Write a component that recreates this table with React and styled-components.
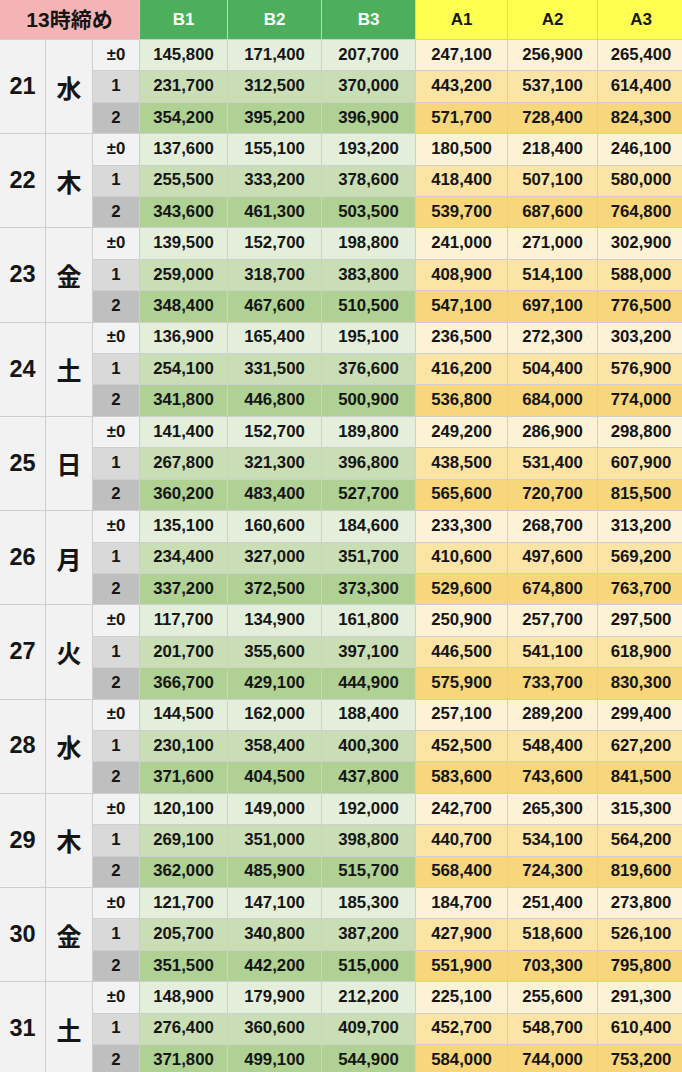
import React from "react";
import styled, { createGlobalStyle } from "styled-components";

const GlobalStyle = createGlobalStyle`
  html, body {
    margin: 0;
    padding: 0;
    overflow: hidden;
    background: #fff;
  }
  body {
    font-family: "Liberation Sans", Arial, "Noto Sans CJK JP", sans-serif;
    color: #151515;
  }
`;

const Sheet = styled.div`
  display: grid;
  grid-template-columns: 45px 46px 46px 87px 93px 93px 91px 89px 86px;
  grid-template-rows: 39px repeat(33, 30.41px);
  gap: 1px;
  width: 682px;
  background: #cfcfcf;
  font-weight: 700;
  font-size: 16.8px;
`;

const Cell = styled.div`
  display: flex;
  align-items: center;
  justify-content: center;
  background: ${(p) => p.$bg};
  white-space: nowrap;
  line-height: 1;
`;

const TitleCell = styled(Cell)`
  grid-column: span 3;
  background: #f4b4b6;
  font-size: 21px;
  font-family: "Liberation Sans", "Noto Sans CJK JP", sans-serif;
`;

const HeadCell = styled(Cell)`
  background: ${(p) => (p.$kind === "B" ? "#4caf5b" : "#ffff52")};
  color: ${(p) => (p.$kind === "B" ? "#fff" : "#151515")};
  font-size: 17px;
`;

const DateCell = styled(Cell)`
  grid-row: span 3;
  background: #f2f2f2;
  font-size: 23.5px;
`;

const DayCell = styled(Cell)`
  grid-row: span 3;
  background: #f2f2f2;
  font-size: 25px;
  font-family: "Noto Sans CJK JP", sans-serif;
  padding-top: 1px;
`;

const labelBg = ["#f2f2f2", "#d9d9d9", "#bfbfbf"];
const bBg = ["#e4efdb", "#c9deb5", "#afd193"];
const aBg = ["#fdf2d6", "#fce4a6", "#f8d77c"];
const labels = ["±0", "1", "2"];

const days = [
  ["21", "水", [
    ["145,800", "171,400", "207,700", "247,100", "256,900", "265,400"],
    ["231,700", "312,500", "370,000", "443,200", "537,100", "614,400"],
    ["354,200", "395,200", "396,900", "571,700", "728,400", "824,300"],
  ]],
  ["22", "木", [
    ["137,600", "155,100", "193,200", "180,500", "218,400", "246,100"],
    ["255,500", "333,200", "378,600", "418,400", "507,100", "580,000"],
    ["343,600", "461,300", "503,500", "539,700", "687,600", "764,800"],
  ]],
  ["23", "金", [
    ["139,500", "152,700", "198,800", "241,000", "271,000", "302,900"],
    ["259,000", "318,700", "383,800", "408,900", "514,100", "588,000"],
    ["348,400", "467,600", "510,500", "547,100", "697,100", "776,500"],
  ]],
  ["24", "土", [
    ["136,900", "165,400", "195,100", "236,500", "272,300", "303,200"],
    ["254,100", "331,500", "376,600", "416,200", "504,400", "576,900"],
    ["341,800", "446,800", "500,900", "536,800", "684,000", "774,000"],
  ]],
  ["25", "日", [
    ["141,400", "152,700", "189,800", "249,200", "286,900", "298,800"],
    ["267,800", "321,300", "396,800", "438,500", "531,400", "607,900"],
    ["360,200", "483,400", "527,700", "565,600", "720,700", "815,500"],
  ]],
  ["26", "月", [
    ["135,100", "160,600", "184,600", "233,300", "268,700", "313,200"],
    ["234,400", "327,000", "351,700", "410,600", "497,600", "569,200"],
    ["337,200", "372,500", "373,300", "529,600", "674,800", "763,700"],
  ]],
  ["27", "火", [
    ["117,700", "134,900", "161,800", "250,900", "257,700", "297,500"],
    ["201,700", "355,600", "397,100", "446,500", "541,100", "618,900"],
    ["366,700", "429,100", "444,900", "575,900", "733,700", "830,300"],
  ]],
  ["28", "水", [
    ["144,500", "162,000", "188,400", "257,100", "289,200", "299,400"],
    ["230,100", "358,400", "400,300", "452,500", "548,400", "627,200"],
    ["371,600", "404,500", "437,800", "583,600", "743,600", "841,500"],
  ]],
  ["29", "木", [
    ["120,100", "149,000", "192,000", "242,700", "265,300", "315,300"],
    ["269,100", "351,000", "398,800", "440,700", "534,100", "564,200"],
    ["362,000", "485,900", "515,700", "568,400", "724,300", "819,600"],
  ]],
  ["30", "金", [
    ["121,700", "147,100", "185,300", "184,700", "251,400", "273,800"],
    ["205,700", "340,800", "387,200", "427,900", "518,600", "526,100"],
    ["351,500", "442,200", "515,000", "551,900", "703,300", "795,800"],
  ]],
  ["31", "土", [
    ["148,900", "179,900", "212,200", "225,100", "255,600", "291,300"],
    ["276,400", "360,600", "409,700", "452,700", "548,700", "610,400"],
    ["371,800", "499,100", "544,900", "584,000", "744,000", "753,200"],
  ]],
];

const heads = ["B1", "B2", "B3", "A1", "A2", "A3"];

export default function App() {
  const cells = [];
  days.forEach(([date, day, rows]) => {
    rows.forEach((vals, r) => {
      if (r === 0) {
        cells.push(<DateCell key={date + "d"}>{date}</DateCell>);
        cells.push(<DayCell key={date + "w"}>{day}</DayCell>);
      }
      cells.push(
        <Cell key={date + "l" + r} $bg={labelBg[r]}>
          {labels[r]}
        </Cell>
      );
      vals.forEach((v, c) => {
        cells.push(
          <Cell key={date + "v" + r + c} $bg={c < 3 ? bBg[r] : aBg[r]}>
            {v}
          </Cell>
        );
      });
    });
  });

  return (
    <>
      <GlobalStyle />
      <Sheet>
        <TitleCell>13時締め</TitleCell>
        {heads.map((h) => (
          <HeadCell key={h} $kind={h[0]}>
            {h}
          </HeadCell>
        ))}
        {cells}
      </Sheet>
    </>
  );
}
